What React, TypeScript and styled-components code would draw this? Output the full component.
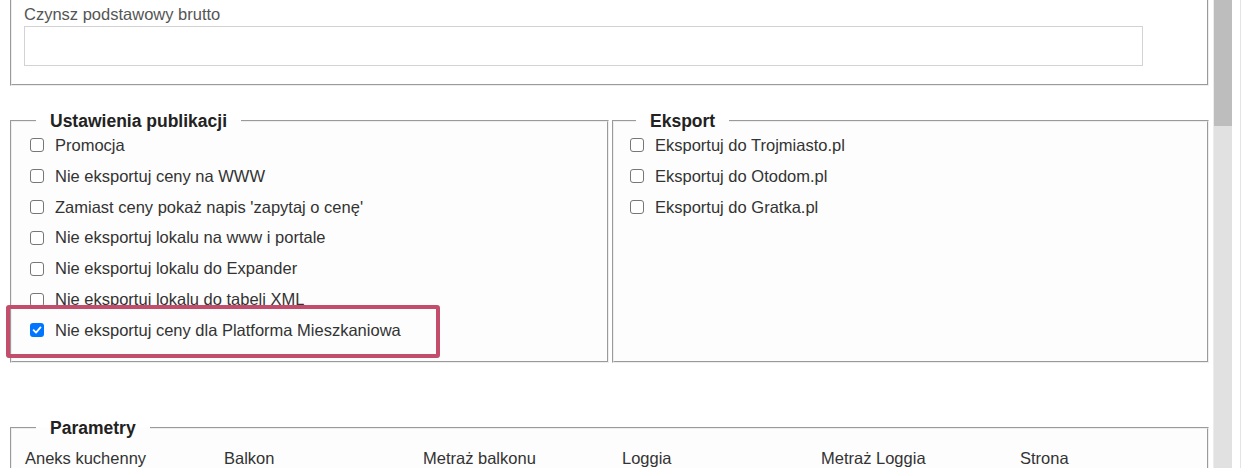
import React from "react";
import styled, { createGlobalStyle } from "styled-components";

const GlobalStyle = createGlobalStyle`
  html, body {
    margin: 0;
    padding: 0;
    background: #ffffff;
  }
  body {
    font-family: "Liberation Sans", Arial, sans-serif;
    font-size: 16.5px;
  }
`;

const Window = styled.div`
  width: 1241px;
  height: 468px;
  display: flex;
  overflow: hidden;
  background: #ffffff;
`;

const Viewport = styled.div`
  width: 1213px;
  height: 468px;
  flex: none;
  overflow: hidden;
`;

const ScrollTrack = styled.div`
  width: 19px;
  height: 468px;
  flex: none;
  background: #e1e1e1;
  border-left: 1px solid #ececec;
  box-sizing: border-box;
`;

const ScrollThumb = styled.div`
  height: 126px;
  background: #bdbdbd;
`;

const Edge = styled.div`
  flex: 1;
  border-right: 1px solid #e4e4e4;
`;

const Content = styled.div`
  box-sizing: border-box;
  min-height: 1738px;
  padding: 0 4px 40px 10px;
`;

const FieldPanel = styled.div`
  border: 2px groove #eeeeee;
  border-top: 0;
  padding: 5px 12px 18px 12px;
`;

const FieldLabel = styled.label`
  display: block;
  font-size: 16.5px;
  line-height: 18px;
  color: #555555;
  margin-bottom: 3px;
`;

const TextInput = styled.input`
  display: block;
  box-sizing: border-box;
  width: 1119px;
  height: 40px;
  margin: 0;
  border: 1px solid #d3d3d3;
  background: #ffffff;
`;

const GroupRow = styled.div`
  display: flex;
  gap: 3px;
  margin-top: 25px;
`;

const Group = styled.fieldset<{ $inset: number }>`
  flex: 1;
  min-width: 0;
  margin: 0;
  border: 2px groove #eeeeee;
  padding: 3px 16px 19px ${(p) => p.$inset}px;
  background: #fdfdfd;
`;

const Legend = styled.legend<{ $offset: number }>`
  margin-left: ${(p) => p.$offset}px;
  padding: 0 14px;
  font-size: 17.5px;
  line-height: 20px;
  font-weight: bold;
  color: #222222;
`;

const CheckList = styled.div`
  display: flex;
  flex-direction: column;
  gap: 8px;
`;

const CheckRow = styled.label<{ $marked?: boolean }>`
  position: relative;
  display: flex;
  align-items: center;
  height: 22.83px;
  font-size: 16.5px;
  line-height: 22.83px;
  color: #333333;

  &::after {
    content: "";
    display: ${(p) => (p.$marked ? "block" : "none")};
    position: absolute;
    top: -14px;
    bottom: -16px;
    left: -23px;
    width: 434px;
    box-sizing: border-box;
    border: 4px solid #c24e6c;
    border-radius: 3px;
    pointer-events: none;
  }
`;

const HiddenInput = styled.input`
  position: absolute;
  opacity: 0;
  width: 0;
  height: 0;
  margin: 0;
`;

const Box = styled.span<{ $checked?: boolean }>`
  box-sizing: border-box;
  width: 14px;
  height: 14px;
  margin: 0 11px 0 1px;
  flex: none;
  display: flex;
  align-items: center;
  justify-content: center;
  border-radius: 3px;
  border: ${(p) => (p.$checked ? "none" : "1.5px solid #777777")};
  background: ${(p) => (p.$checked ? "#0075ff" : "#ffffff")};
`;

function CheckMark() {
  return (
    <svg width="10" height="10" viewBox="0 0 10 10">
      <path d="M1.6 5.2 L4 7.6 L8.5 2.4" fill="none" stroke="#ffffff" strokeWidth="1.8" strokeLinecap="round" strokeLinejoin="round" />
    </svg>
  );
}

function Check({ text, checked, marked }: { text: string; checked?: boolean; marked?: boolean }) {
  return (
    <CheckRow $marked={marked}>
      <HiddenInput type="checkbox" defaultChecked={checked} />
      <Box $checked={checked}>{checked && <CheckMark />}</Box>
      {text}
    </CheckRow>
  );
}

const ParamsGroup = styled(Group)`
  margin-top: 55px;
  padding-top: 11px;
`;

const ParamGrid = styled.div`
  display: grid;
  grid-template-columns: repeat(6, 199px);
  row-gap: 4px;
`;

const ParamLabel = styled.div`
  font-size: 16.5px;
  line-height: 18px;
  color: #333333;
`;

const ParamInput = styled.input`
  box-sizing: border-box;
  width: 185px;
  height: 34px;
  margin: 0;
  border: 1px solid #d3d3d3;
`;

const publication = [
  "Promocja",
  "Nie eksportuj ceny na WWW",
  "Zamiast ceny pokaż napis 'zapytaj o cenę'",
  "Nie eksportuj lokalu na www i portale",
  "Nie eksportuj lokalu do Expander",
  "Nie eksportuj lokalu do tabeli XML",
];

const exportTargets = [
  "Eksportuj do Trojmiasto.pl",
  "Eksportuj do Otodom.pl",
  "Eksportuj do Gratka.pl",
];

const params = ["Aneks kuchenny", "Balkon", "Metraż balkonu", "Loggia", "Metraż Loggia", "Strona"];

export default function App() {
  return (
    <>
      <GlobalStyle />
      <Window>
        <Viewport>
          <Content>
            <FieldPanel>
              <FieldLabel>Czynsz podstawowy brutto</FieldLabel>
              <TextInput type="text" />
            </FieldPanel>

            <GroupRow>
              <Group $inset={17}>
                <Legend $offset={7}>Ustawienia publikacji</Legend>
                <CheckList>
                  {publication.map((t) => (
                    <Check key={t} text={t} />
                  ))}
                  <Check text="Nie eksportuj ceny dla Platforma Mieszkaniowa" checked marked />
                </CheckList>
              </Group>
              <Group $inset={15}>
                <Legend $offset={7}>Eksport</Legend>
                <CheckList>
                  {exportTargets.map((t) => (
                    <Check key={t} text={t} />
                  ))}
                </CheckList>
              </Group>
            </GroupRow>

            <ParamsGroup $inset={13}>
              <Legend $offset={11}>Parametry</Legend>
              <ParamGrid>
                {params.map((p) => (
                  <ParamLabel key={p}>{p}</ParamLabel>
                ))}
                {params.map((p) => (
                  <ParamInput key={p} type="text" />
                ))}
              </ParamGrid>
            </ParamsGroup>
          </Content>
        </Viewport>
        <ScrollTrack>
          <ScrollThumb />
        </ScrollTrack>
        <Edge />
      </Window>
    </>
  );
}
